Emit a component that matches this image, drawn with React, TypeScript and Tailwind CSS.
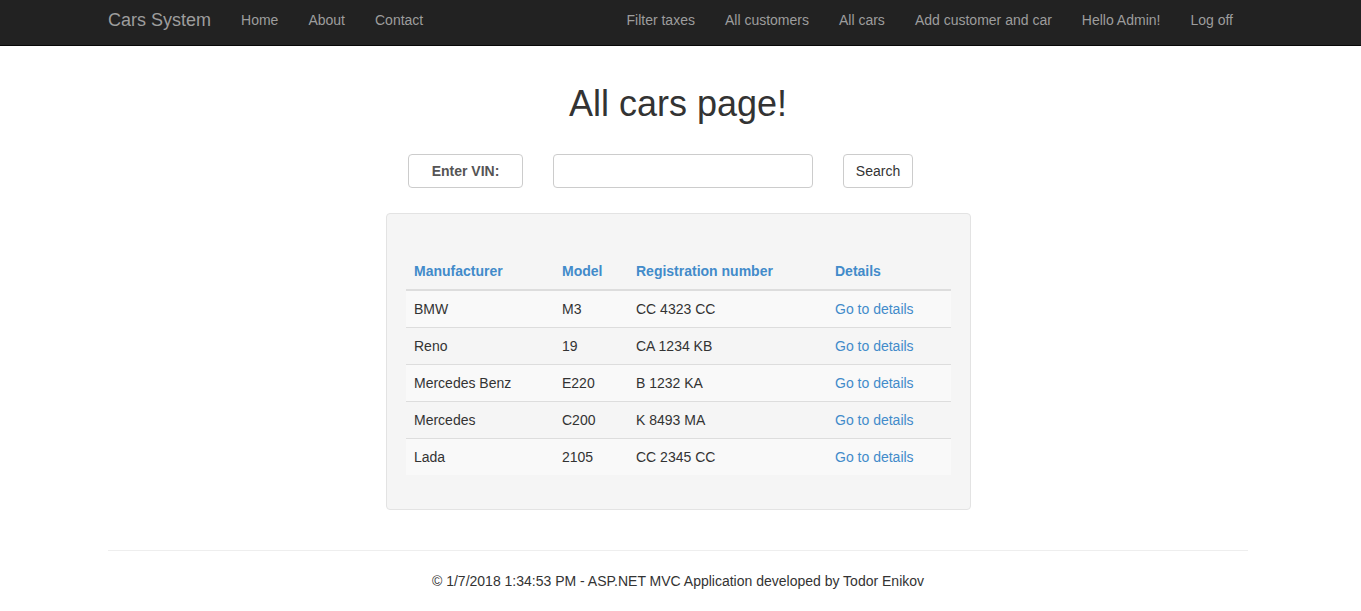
import React from 'react';

const cars = [
  { make: 'BMW', model: 'M3', reg: 'CC 4323 CC' },
  { make: 'Reno', model: '19', reg: 'CA 1234 KB' },
  { make: 'Mercedes Benz', model: 'E220', reg: 'B 1232 KA' },
  { make: 'Mercedes', model: 'C200', reg: 'K 8493 MA' },
  { make: 'Lada', model: '2105', reg: 'CC 2345 CC' },
];

const leftLinks = ['Home', 'About', 'Contact'];
const rightLinks = ['Filter taxes', 'All customers', 'All cars', 'Add customer and car', 'Hello Admin!', 'Log off'];

export default function App() {
  return (
    <div className="min-h-[611px] bg-white text-[14px] leading-5 text-[#333] font-['Liberation_Sans',Arial,sans-serif]">
      {/* Navbar */}
      <nav className="h-[46px] bg-[#222] border-b border-[#080808]">
        <div className="w-[1356px]">
          <div className="mx-auto flex w-[1140px] items-start justify-between">
            <div className="flex items-start">
              <a className="pr-[15px] pt-[9px] text-[18px] leading-[22px] text-[#9d9d9d]">Cars System</a>
              {leftLinks.map((l) => (
                <a key={l} className="px-[15px] py-[10px] text-[#9d9d9d]">{l}</a>
              ))}
            </div>
            <div className="flex items-start">
              {rightLinks.map((l) => (
                <a key={l} className="px-[15px] py-[10px] text-[#9d9d9d]">{l}</a>
              ))}
            </div>
          </div>
        </div>
      </nav>

      <div className="w-[1356px]">
        <div className="mx-auto w-[1140px]">
          <h2 className="mt-[38px] text-center text-[36px] leading-[40px] text-[#333]">All cars page!</h2>

          {/* Search row */}
          <div className="mt-[30px] flex items-center pl-[300px]">
            <div className="flex h-[34px] w-[115px] items-center justify-center rounded border border-[#ccc] font-bold text-[#555]">
              Enter VIN:
            </div>
            <input className="ml-[30px] h-[34px] w-[260px] rounded border border-[#ccc] px-3 outline-none" />
            <button className="ml-[30px] h-[34px] w-[70px] rounded border border-[#ccc] bg-white">Search</button>
          </div>

          {/* Well with table */}
          <div className="ml-[278px] mt-[25px] w-[585px] rounded border border-[#e3e3e3] bg-[#f5f5f5] px-[19px] pb-[34px] pt-[39px]">
            <table className="w-full border-collapse text-left">
              <thead>
                <tr>
                  <th className="w-[148px] border-b-2 border-[#ddd] px-2 py-2 font-bold text-[#428bca]">Manufacturer</th>
                  <th className="w-[74px] border-b-2 border-[#ddd] px-2 py-2 font-bold text-[#428bca]">Model</th>
                  <th className="w-[199px] border-b-2 border-[#ddd] px-2 py-2 font-bold text-[#428bca]">Registration number</th>
                  <th className="border-b-2 border-[#ddd] px-2 py-2 font-bold text-[#428bca]">Details</th>
                </tr>
              </thead>
              <tbody>
                {cars.map((c, i) => (
                  <tr key={c.make} className={i % 2 === 0 ? 'bg-[#f9f9f9]' : ''}>
                    <td className={`px-2 py-2 ${i > 0 ? 'border-t border-[#ddd]' : ''}`}>{c.make}</td>
                    <td className={`px-2 py-2 ${i > 0 ? 'border-t border-[#ddd]' : ''}`}>{c.model}</td>
                    <td className={`px-2 py-2 ${i > 0 ? 'border-t border-[#ddd]' : ''}`}>{c.reg}</td>
                    <td className={`px-2 py-2 ${i > 0 ? 'border-t border-[#ddd]' : ''}`}>
                      <a className="text-[#428bca]">Go to details</a>
                    </td>
                  </tr>
                ))}
              </tbody>
            </table>
          </div>

          {/* Footer */}
          <hr className="mt-[40px] border-t border-[#eee]" />
          <footer className="mt-[20px] text-center">
            © 1/7/2018 1:34:53 PM - ASP.NET MVC Application developed by Todor Enikov
          </footer>
        </div>
      </div>
    </div>
  );
}
